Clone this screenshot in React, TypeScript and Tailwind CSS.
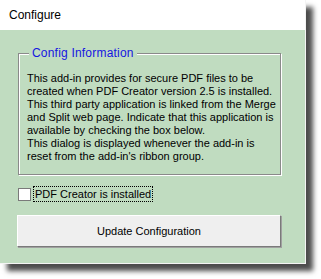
export default function App() {
  const lines = [
    "This add-in provides for secure PDF files to be",
    "created when PDF Creator version 2.5 is installed.",
    "This third party application is linked from the Merge",
    "and Split web page. Indicate that this application is",
    "available by checking the box below.",
    "This dialog is displayed whenever the add-in is",
    "reset from the add-in's ribbon group.",
  ];

  return (
    <div className="h-[279px] w-[321px] overflow-hidden bg-white" style={{ fontFamily: '"Liberation Sans", Arial, sans-serif' }}>
      <div className="flex h-[264px] w-[306px] flex-col border-r border-b border-[#f4f4f4] shadow-[7px_7px_5px_rgba(0,0,0,0.7)]">
        <div className="flex h-[30px] items-center bg-white pl-[9px] text-[12px] text-black">Configure</div>
        <div className="flex flex-1 flex-col bg-[#c0dcc0] pl-[17px] pt-[23px]">
          <div className="relative ml-[1px] h-[122px] w-[263px] border border-[#8a8a8a] pl-[8px] pt-[18px] shadow-[inset_1px_1px_0_#fff,1px_1px_0_#fff]">
            <span className="absolute left-[10px] top-[-8px] bg-[#c0dcc0] px-[3px] text-[12px] leading-[14px] tracking-[0.2px] text-[#1515e0]">
              Config Information
            </span>
            <div className="text-[11px] leading-[13px] text-black">
              {lines.map((l) => (
                <div key={l}>{l}</div>
              ))}
            </div>
          </div>
          <div className="mt-[11px] flex items-center gap-[2px]">
            <div className="ml-[1px] h-[13px] w-[13px] border border-[#7a7a7a] bg-white" />
            <span className="border border-dotted border-black px-[1px] text-[11px] leading-[14px] text-black">
              PDF Creator is installed
            </span>
          </div>
          <button className="mt-[13px] flex h-[32px] w-[264px] items-center justify-center border border-t-white border-l-white border-r-[#7a7a7a] border-b-[#7a7a7a] bg-[#efefef] text-[11px] text-black shadow-[1px_1px_0_#a0a0a0]">
            Update Configuration
          </button>
        </div>
      </div>
    </div>
  );
}
